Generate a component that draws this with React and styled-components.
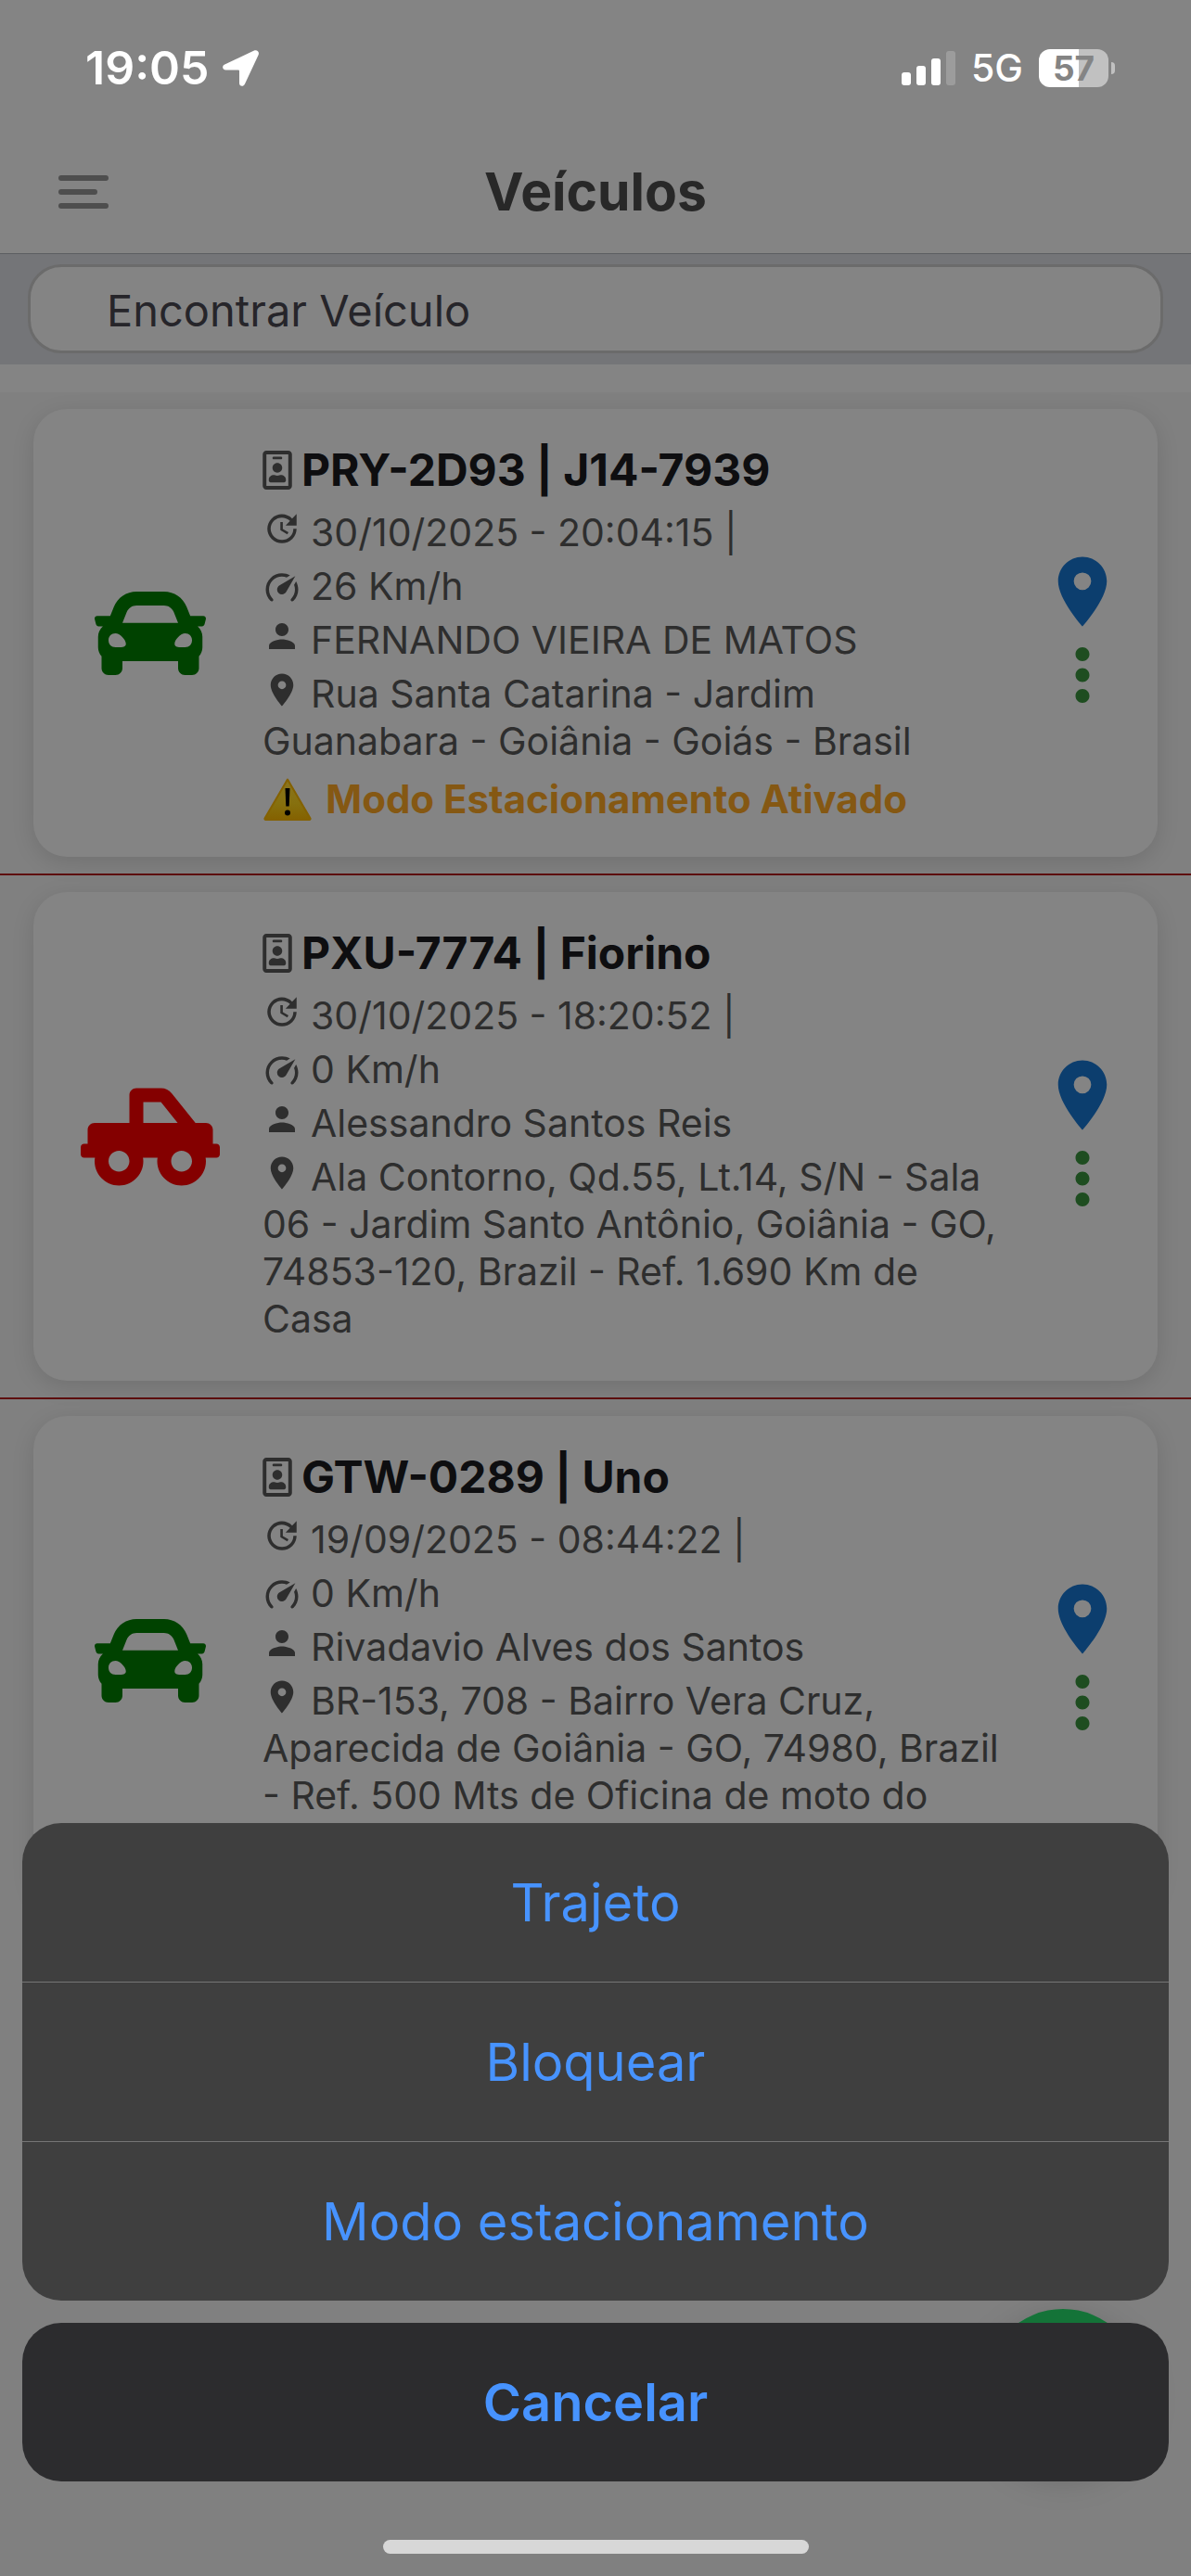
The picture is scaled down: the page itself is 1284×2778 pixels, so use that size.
import styled, { createGlobalStyle } from 'styled-components';
import { FaCar, FaRegIdBadge, FaTruckPickup } from 'react-icons/fa';
import { MdLocationOn, MdMoreVert, MdPerson, MdUpdate } from 'react-icons/md';

const GlobalStyle = createGlobalStyle`
  * {
    box-sizing: border-box;
  }

  body {
    margin: 0;
    background-color: #808080;
    font-family: Inter, 'Liberation Sans', sans-serif;
  }

  button {
    border: 0;
    padding: 0;
    background: none;
    font-family: inherit;
    cursor: pointer;
  }
`;

const Screen = styled.div`
  height: 100vh;
  overflow: hidden;
  display: flex;
  flex-direction: column;
`;

const StatusBar = styled.div`
  display: flex;
  justify-content: space-between;
  align-items: center;
  height: 144px;
  padding: 2px 82px 0 92px;
  background-color: #848484;
  color: #fff;
`;

const StatusGroup = styled.div`
  display: flex;
  align-items: center;
  gap: ${({ $gap }) => $gap}px;
`;

const Clock = styled.span`
  font-size: 50px;
  font-weight: 600;
`;

const Network = styled.span`
  font-size: 41px;
  font-weight: 500;
`;

const Battery = styled.div`
  display: flex;
  align-items: center;
  gap: 3px;

  &::after {
    content: '';
    width: 4px;
    height: 13px;
    border-radius: 0 6px 6px 0;
    background-color: #c1c1c1;
  }
`;

const BatteryLevel = styled.span`
  width: 75px;
  height: 41px;
  border-radius: 12px;
  background: linear-gradient(90deg, #fff 57%, #c1c1c1 57%);
  color: #848484;
  font-size: 37px;
  font-weight: 700;
  line-height: 41px;
  text-align: center;
`;

const Header = styled.header`
  display: grid;
  grid-template-columns: 1fr auto 1fr;
  align-items: center;
  height: 130px;
  padding: 0 63px 3px;
  background-color: #848484;
  border-bottom: 1px solid #5c5e61;
`;

const MenuButton = styled.button`
  display: flex;
  color: #4e4e4e;
`;

const Title = styled.h1`
  margin: 0;
  color: #282828;
  font-size: 57px;
  font-weight: 700;
  line-height: 70px;
`;

const SearchBar = styled.div`
  height: 119px;
  padding: 11px 30px 12px;
  background-color: #747578;
`;

const SearchInput = styled.input`
  width: 100%;
  height: 96px;
  padding: 3px 82px 0;
  border: 3px solid #6b6b6b;
  border-radius: 36px;
  background-color: #848484;
  color: #26252a;
  font-family: inherit;
  font-size: 47px;
  outline: none;

  &::placeholder {
    color: #26252a;
    opacity: 1;
  }
`;

const List = styled.main`
  flex: 1;
  border-top: 30px solid #848484;
`;

const ListItem = styled.div`
  padding: 18px 36px;
  border-bottom: 2px solid #5e0f0f;

  &:last-child {
    border-bottom: 0;
  }
`;

const Card = styled.article`
  display: flex;
  align-items: center;
  padding: 30px 36px 30px 47px;
  border-radius: 36px;
  background-color: #848484;
  box-shadow: 0 6px 24px rgba(0, 0, 0, 0.12);
`;

const VehicleIcon = styled.div`
  display: flex;
  justify-content: center;
  flex-shrink: 0;
  width: 158px;
  margin-right: 42px;
  color: ${({ $color }) => $color};
`;

const PickupIcon = styled(FaTruckPickup)`
  width: 150px;
  height: 120px;
`;

const Info = styled.div`
  flex: 1;
  margin-right: 27px;
  padding-top: 8px;
  color: #2e2e2e;
`;

const Plate = styled.h2`
  display: flex;
  align-items: center;
  gap: 10px;
  margin: 0 0 14px;
  color: #0e0e10;
  font-size: 48px;
  font-weight: 700;
  line-height: 56px;
`;

const BadgeIcon = styled(FaRegIdBadge)`
  width: 32px;
  height: 42px;
  color: #2e2e2e;
`;

const Line = styled.p`
  margin: 0 0 7px;
  font-size: 41px;
  line-height: 51px;

  svg {
    margin-right: 10px;
    vertical-align: ${({ $low }) => ($low ? '-8px' : '-2px')};
  }
`;

const Address = styled(Line)`
  min-height: ${({ $lines = 1 }) => $lines * 51}px;
  margin-bottom: 11px;
`;

const Alert = styled.p`
  display: flex;
  align-items: center;
  gap: 14px;
  margin: 0 0 7px;
  color: #855813;
  font-size: 42px;
  font-weight: 700;
  line-height: 51px;
`;

const Actions = styled.div`
  display: flex;
  flex-direction: column;
`;

const ActionButton = styled.button`
  display: flex;
  color: ${({ $color }) => $color};
`;

const Fab = styled.button`
  position: fixed;
  right: 54px;
  bottom: 120px;
  width: 168px;
  height: 168px;
  border-radius: 50%;
  background-color: #147338;
  box-shadow: 0 12px 40px rgba(0, 0, 0, 0.2);
`;

const Sheet = styled.div`
  position: fixed;
  right: 0;
  bottom: 0;
  left: 0;
  display: flex;
  flex-direction: column;
  gap: 24px;
  padding: 0 24px 24px;
`;

const SheetGroup = styled.div`
  overflow: hidden;
  border-radius: 42px;
  background-color: ${({ $bg }) => $bg};
`;

const SheetButton = styled.button`
  display: block;
  width: 100%;
  height: 171px;
  color: #4793ff;
  font-size: 56px;
  font-weight: ${({ $bold }) => ($bold ? 600 : 400)};

  & + & {
    height: 172px;
    border-top: 1px solid #757575;
  }
`;

const HomeIndicator = styled.div`
  align-self: center;
  width: 459px;
  height: 15px;
  margin-top: 39px;
  border-radius: 8px;
  background-color: #d7d7d7;
`;

const Speedometer = () => (
  <svg width="42" height="42" viewBox="0 0 24 24" fill="currentColor" aria-hidden="true">
    <path d="M12,16A3,3 0 0,1 9,13C9,11.88 9.61,10.9 10.5,10.39L20.21,4.77L14.68,14.35C14.18,15.33 13.17,16 12,16M12,3C13.81,3 15.5,3.5 16.97,4.32L14.87,5.53C14,5.19 13,5 12,5A8,8 0 0,0 4,13C4,15.21 4.89,17.21 6.34,18.65H6.35C6.74,19.04 6.74,19.67 6.35,20.06C5.96,20.45 5.32,20.45 4.93,20.07C3.12,18.26 2,15.76 2,13A10,10 0 0,1 12,3M22,13C22,15.76 20.88,18.26 19.07,20.07C18.68,20.45 18.05,20.45 17.66,20.06C17.27,19.67 17.27,19.04 17.66,18.65C19.11,17.2 20,15.21 20,13C20,12 19.81,11 19.46,10.1L20.67,8C21.5,9.5 22,11.18 22,13Z" />
  </svg>
);

const Warning = () => (
  <svg width="54" height="48" viewBox="0 0 54 48" aria-hidden="true">
    <defs>
      <linearGradient id="warning" x1="0" y1="0" x2="0" y2="1">
        <stop offset="0" stopColor="#8a7420" />
        <stop offset="0.6" stopColor="#86700e" />
        <stop offset="1" stopColor="#846100" />
      </linearGradient>
    </defs>
    <path
      d="M27 2.500 51.500 44.500a1 1 0 0 1-1 1.500h-47a1 1 0 0 1-1-1.500z"
      fill="url(#warning)"
      stroke="#846100"
      strokeWidth="2"
      strokeLinejoin="round"
    />
    <path d="M24.500 12h5l-.8 19.500h-3.400z" fill="#000" />
    <circle cx="27" cy="38.500" r="3" fill="#000" />
  </svg>
);

const Signal = () => (
  <svg width="58" height="37" viewBox="0 0 58 37" fill="currentColor" aria-hidden="true">
    <rect x="0" y="23" width="10" height="14" rx="3" />
    <rect x="16" y="16" width="10" height="21" rx="3" />
    <rect x="32" y="8" width="10" height="29" rx="3" />
    <rect x="48" y="0" width="10" height="37" rx="3" opacity="0.2" />
  </svg>
);

const LocationArrow = () => (
  <svg width="39" height="39" viewBox="0 0 39 39" fill="currentColor" aria-hidden="true">
    <path d="M34 .6C37 -.8 40 2 38.600 5.200L24 36.500c-1.600 3.400-6 2.900-6-1V22.500a1 1 0 0 0-1-1H3.500c-3.900 0-4.600-4.400-1.200-6z" />
  </svg>
);

const vehicles = [
  {
    plate: 'PRY-2D93 | J14-7939',
    time: '30/10/2025 - 20:04:15 |',
    speed: '26 Km/h',
    driver: 'FERNANDO VIEIRA DE MATOS',
    address: 'Rua Santa Catarina - Jardim Guanabara - Goiânia - Goiás - Brasil',
    color: '#004200',
    parking: true,
  },
  {
    plate: 'PXU-7774 | Fiorino',
    time: '30/10/2025 - 18:20:52 |',
    speed: '0 Km/h',
    driver: 'Alessandro Santos Reis',
    address:
      'Ala Contorno, Qd.55, Lt.14, S/N - Sala 06 - Jardim Santo Antônio, Goiânia - GO, 74853-120, Brazil - Ref. 1.690 Km de Casa',
    color: '#840000',
    pickup: true,
  },
  {
    plate: 'GTW-0289 | Uno',
    time: '19/09/2025 - 08:44:22 |',
    speed: '0 Km/h',
    driver: 'Rivadavio Alves dos Santos',
    address:
      'BR-153, 708 - Bairro Vera Cruz, Aparecida de Goiânia - GO, 74980, Brazil - Ref. 500 Mts de Oficina de moto do',
    addressLines: 4,
    color: '#004200',
  },
];

const VehicleCard = ({ vehicle }) => (
  <ListItem>
    <Card>
      <VehicleIcon $color={vehicle.color}>
        {vehicle.pickup ? <PickupIcon /> : <FaCar size={120} />}
      </VehicleIcon>
      <Info>
        <Plate>
          <BadgeIcon />
          {vehicle.plate}
        </Plate>
        <Line>
          <MdUpdate size={42} />
          {vehicle.time}
        </Line>
        <Line $low>
          <Speedometer />
          {vehicle.speed}
        </Line>
        <Line>
          <MdPerson size={42} />
          {vehicle.driver}
        </Line>
        <Address $lines={vehicle.addressLines}>
          <MdLocationOn size={42} />
          {vehicle.address}
        </Address>
        {vehicle.parking && (
          <Alert>
            <Warning />
            Modo Estacionamento Ativado
          </Alert>
        )}
      </Info>
      <Actions>
        <ActionButton $color="#0c3e6e" aria-label="Mapa">
          <MdLocationOn size={90} />
        </ActionButton>
        <ActionButton $color="#1e4d20" aria-label="Opções">
          <MdMoreVert size={90} />
        </ActionButton>
      </Actions>
    </Card>
  </ListItem>
);

const App = () => {
  return (
    <Screen>
      <GlobalStyle />
      <StatusBar>
        <StatusGroup $gap={14}>
          <Clock>19:05</Clock>
          <LocationArrow />
        </StatusGroup>
        <StatusGroup $gap={17}>
          <Signal />
          <Network>5G</Network>
          <Battery>
            <BatteryLevel>57</BatteryLevel>
          </Battery>
        </StatusGroup>
      </StatusBar>

      <Header>
        <MenuButton aria-label="Menu">
          <svg width="54" height="36" viewBox="0 0 54 36" fill="currentColor" aria-hidden="true">
            <rect width="54" height="6" rx="3" />
            <rect y="15" width="42" height="6" rx="3" />
            <rect y="30" width="54" height="6" rx="3" />
          </svg>
        </MenuButton>
        <Title>Veículos</Title>
      </Header>

      <SearchBar>
        <SearchInput type="text" placeholder="Encontrar Veículo" aria-label="Encontrar Veículo" />
      </SearchBar>

      <List>
        {vehicles.map((vehicle) => (
          <VehicleCard key={vehicle.plate} vehicle={vehicle} />
        ))}
      </List>

      <Fab aria-label="Suporte" />

      <Sheet>
        <SheetGroup $bg="#3f3f3f">
          <SheetButton>Trajeto</SheetButton>
          <SheetButton>Bloquear</SheetButton>
          <SheetButton>Modo estacionamento</SheetButton>
        </SheetGroup>
        <SheetGroup $bg="#2c2c2e">
          <SheetButton $bold>Cancelar</SheetButton>
        </SheetGroup>
        <HomeIndicator />
      </Sheet>
    </Screen>
  );
};

export default App;
